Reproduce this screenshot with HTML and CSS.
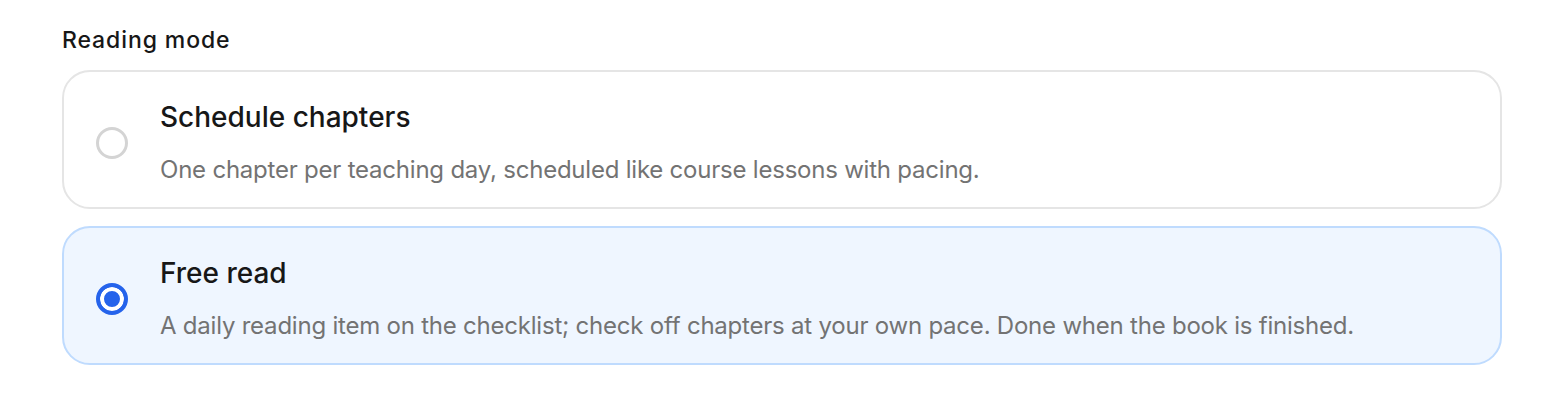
FILE: index.html
```html
<!DOCTYPE html>
<html>
<head>
<link rel="stylesheet" href="styles.css">
</head>
<body>

<div class="field">
  <div class="label">Reading mode</div>

  <div class="options">
    <label class="option">
      <span class="radio"></span>
      <span class="text">
        <span class="title">Schedule chapters</span>
        <span class="desc">One chapter per teaching day, scheduled like course lessons with pacing.</span>
      </span>
    </label>

    <label class="option selected">
      <span class="radio"></span>
      <span class="text">
        <span class="title">Free read</span>
        <span class="desc">A daily reading item on the checklist; check off chapters at your own pace. Done when the book is finished.</span>
      </span>
    </label>
  </div>
</div>

</body>
</html>
```

FILE: styles.css
```css
body {
  margin: 0;
  background: #ffffff;
  font-family: Inter, "Noto Sans", sans-serif;
}

.field {
  padding: 26px 40px 0 62px;
}

.label {
  font-size: 23px;
  line-height: 28px;
  font-weight: 500;
  color: #171717;
  letter-spacing: 0.9px;
  margin-bottom: 16px;
}

.options {
  display: flex;
  flex-direction: column;
  gap: 17px;
}

.option {
  display: flex;
  align-items: center;
  gap: 32px;
  padding: 28px 32px 22px;
  border: 2px solid #e5e5e5;
  border-radius: 28px;
  background: #ffffff;
}

.option.selected {
  background: #eff6ff;
  border-color: #bfdbfe;
}

.radio {
  flex: none;
  width: 32px;
  height: 32px;
  box-sizing: border-box;
  border: 3px solid #d4d4d4;
  border-radius: 50%;
  background: #ffffff;
}

.selected .radio {
  border: 4px solid #2563eb;
  box-shadow: inset 0 0 0 4px #ffffff;
  background: #2563eb;
}

.text {
  display: flex;
  flex-direction: column;
  gap: 21px;
}

.title {
  font-size: 28px;
  line-height: 34px;
  font-weight: 500;
  color: #171717;
}

.desc {
  font-size: 24px;
  line-height: 30px;
  color: #737373;
  letter-spacing: -0.22px;
}
```
